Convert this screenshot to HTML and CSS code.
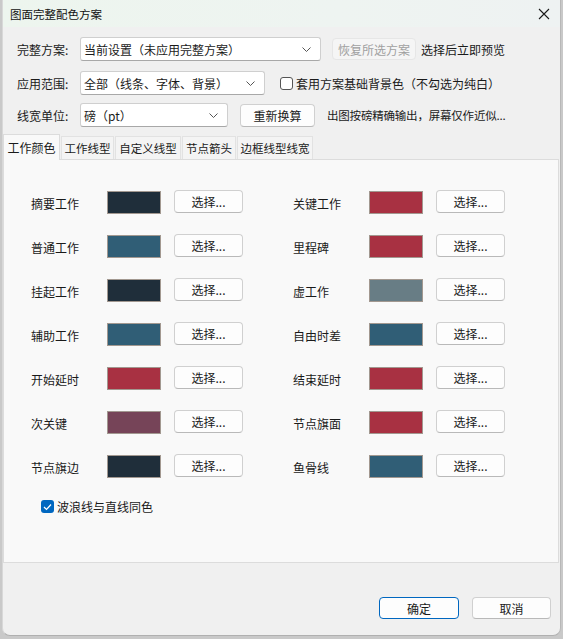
FILE: index.html
```html
<!DOCTYPE html>
<html lang="zh">
<head>
<meta charset="utf-8">
<link rel="stylesheet" href="styles.css">
</head>
<body>
<div class="win">
  <div class="titlebar">
    <span class="title">图面完整配色方案</span>
    <svg class="close" width="12" height="12" viewBox="0 0 12 12"><path d="M1 1L11 11M11 1L1 11" stroke="#1a1a1a" stroke-width="1.1" fill="none"/></svg>
  </div>
  <div class="form">
    <div class="frow r1">
      <span class="lbl">完整方案:</span>
      <div class="combo c1"><span>当前设置（未应用完整方案）</span><svg class="chev" width="9" height="5" viewBox="0 0 9 5"><path d="M0.5 0.5L4.5 4.5L8.5 0.5" stroke="#555" fill="none"/></svg></div>
      <div class="btn dis b1">恢复所选方案</div>
      <span class="note">选择后立即预览</span>
    </div>
    <div class="frow r2">
      <span class="lbl">应用范围:</span>
      <div class="combo c2"><span>全部（线条、字体、背景）</span><svg class="chev" width="9" height="5" viewBox="0 0 9 5"><path d="M0.5 0.5L4.5 4.5L8.5 0.5" stroke="#555" fill="none"/></svg></div>
      <span class="cb"></span>
      <span class="note2">套用方案基础背景色（不勾选为纯白）</span>
    </div>
    <div class="frow r3">
      <span class="lbl">线宽单位:</span>
      <div class="combo c3"><span>磅（pt）</span><svg class="chev" width="9" height="5" viewBox="0 0 9 5"><path d="M0.5 0.5L4.5 4.5L8.5 0.5" stroke="#555" fill="none"/></svg></div>
      <div class="btn b2">重新换算</div>
      <span class="note3">出图按磅精确输出，屏幕仅作近似...</span>
    </div>
  </div>
  <div class="tabs">
    <div class="tab sel t1">工作颜色</div>
    <div class="tab t2">工作线型</div>
    <div class="tab t3">自定义线型</div>
    <div class="tab t4">节点箭头</div>
    <div class="tab t5">边框线型线宽</div>
  </div>
  <div class="panel">
    <div class="grid">
      <div class="item"><span class="il">摘要工作</span><span class="sw" style="background:#1f2e3a"></span><div class="btn pick">选择...</div></div>
      <div class="item"><span class="il">关键工作</span><span class="sw" style="background:#a83142"></span><div class="btn pick">选择...</div></div>
      <div class="item"><span class="il">普通工作</span><span class="sw" style="background:#305e76"></span><div class="btn pick">选择...</div></div>
      <div class="item"><span class="il">里程碑</span><span class="sw" style="background:#a83142"></span><div class="btn pick">选择...</div></div>
      <div class="item"><span class="il">挂起工作</span><span class="sw" style="background:#1f2e3a"></span><div class="btn pick">选择...</div></div>
      <div class="item"><span class="il">虚工作</span><span class="sw" style="background:#687d85"></span><div class="btn pick">选择...</div></div>
      <div class="item"><span class="il">辅助工作</span><span class="sw" style="background:#305e76"></span><div class="btn pick">选择...</div></div>
      <div class="item"><span class="il">自由时差</span><span class="sw" style="background:#305e76"></span><div class="btn pick">选择...</div></div>
      <div class="item"><span class="il">开始延时</span><span class="sw" style="background:#a83142"></span><div class="btn pick">选择...</div></div>
      <div class="item"><span class="il">结束延时</span><span class="sw" style="background:#a83142"></span><div class="btn pick">选择...</div></div>
      <div class="item"><span class="il">次关键</span><span class="sw" style="background:#764458"></span><div class="btn pick">选择...</div></div>
      <div class="item"><span class="il">节点旗面</span><span class="sw" style="background:#a83142"></span><div class="btn pick">选择...</div></div>
      <div class="item"><span class="il">节点旗边</span><span class="sw" style="background:#1f2e3a"></span><div class="btn pick">选择...</div></div>
      <div class="item"><span class="il">鱼骨线</span><span class="sw" style="background:#305e76"></span><div class="btn pick">选择...</div></div>
    </div>
    <div class="wave">
      <span class="cbon"><svg width="9" height="8" viewBox="0 0 9 8"><path d="M1 4L3.5 6.5L8 1.5" stroke="#fff" stroke-width="1.2" fill="none"/></svg></span>
      <span>波浪线与直线同色</span>
    </div>
  </div>
  <div class="foot">
    <div class="btn ok">确定</div>
    <div class="btn cancel">取消</div>
  </div>
</div>
</body>
</html>
```

FILE: styles.css
```css
* { box-sizing: border-box; }
html, body { margin: 0; padding: 0; }
body {
  width: 563px;
  height: 639px;
  background: #c9c9c9;
  font-family: "Noto Sans CJK SC", "Noto Sans", sans-serif;
  font-size: 12px;
  color: #1a1a1a;
  overflow: hidden;
}
.win {
  margin-left: 2px;
  width: 559px;
  height: 636px;
  background: #f0f0f0;
  border-left: 1px solid #d8d8d8;
  border-right: 1px solid #b8b8b8;
  border-bottom: 1px solid #b0b0b0;
  border-radius: 0 0 8px 8px;
  display: flex;
  flex-direction: column;
  overflow: hidden;
}
.titlebar {
  height: 27px;
  background: linear-gradient(90deg, #edf5ee 0%, #eef4f1 60%, #eef2f2 100%);
  display: flex;
  align-items: center;
  justify-content: space-between;
  padding: 0 10px 0 7px;
}
.title { font-size: 11.5px; color: #111; }
.close { display: block; }
.form {
  padding: 10px 0 0 14px;
  display: flex;
  flex-direction: column;
}
.frow {
  display: flex;
  align-items: center;
  white-space: nowrap;
}
.r1 { height: 24px; }
.r2 { height: 24px; margin-top: 10px; }
.r3 { height: 24px; margin-top: 8px; }
.lbl { width: 63px; }
.combo {
  height: 24px;
  background: #fff;
  border: 1px solid #cfcfcf;
  border-bottom-color: #a8a8a8;
  border-radius: 3px;
  display: flex;
  align-items: center;
  justify-content: space-between;
  padding: 0 9px 0 3px;
}
.chev { display: block; }
.c1 { width: 241px; }
.c2 { width: 185px; }
.c3 { width: 148px; }
.btn {
  background: #fdfdfd;
  border: 1px solid #d0d0d0;
  border-bottom-color: #b9b9b9;
  border-radius: 4px;
  display: flex;
  align-items: center;
  justify-content: center;
  height: 22px;
}
.b1 { width: 84px; margin-left: 11px; background: #f5f5f5; border-color: #e6e6e6; color: #a0a0a0; }
.note { margin-left: 5px; }
.cb {
  width: 13px; height: 13px;
  border: 1px solid #555;
  border-radius: 3px;
  background: #fff;
  margin-left: 15px;
}
.note2 { margin-left: 3px; }
.b2 { width: 75px; margin-left: 12px; height: 23px; }
.note3 { margin-left: 12px; font-size: 11.5px; letter-spacing: -0.2px; }
.tabs {
  margin-top: 7px;
  display: flex;
  align-items: flex-end;
  height: 25px;
  position: relative;
  z-index: 1;
}
.tab {
  height: 23px;
  display: flex;
  align-items: center;
  justify-content: center;
  background: #f4f4f4;
  border: 1px solid #e2e2e2;
  border-bottom: none;
  margin-right: 1px;
  font-size: 11.5px;
  white-space: nowrap;
}
.t1 { width: 57px; }
.t2 { width: 53px; }
.t3 { width: 66px; }
.t4 { width: 54px; }
.t5 { width: 76px; }
.tab.sel {
  height: 26px;
  background: #f9f9f9;
  border-color: #dcdcdc;
  margin-bottom: -1px;
  font-size: 12px;
}
.panel {
  height: 404px;
  margin: 0 1px 0 0;
  background: #f9f9f9;
  border: 1px solid #dcdcdc;
  padding: 30px 0 0 27px;
}
.grid {
  display: grid;
  grid-template-columns: 262px 262px;
  row-gap: 21px;
}
.item {
  display: flex;
  align-items: center;
  height: 23px;
}
.il { width: 76px; padding-top: 3px; }
.sw {
  width: 54px;
  height: 23px;
  border: 1px solid #a29890;
  margin-top: 1px;
}
.pick { width: 69px; height: 23px; margin-left: 13px; }
.wave {
  display: flex;
  align-items: center;
  margin-top: 21px;
  margin-left: 10px;
}
.cbon {
  width: 13px; height: 13px;
  background: #0067c0;
  border-radius: 3px;
  display: flex;
  align-items: center;
  justify-content: center;
  margin-right: 3px;
}
.cbon svg { display: block; }
.foot {
  display: flex;
  justify-content: flex-end;
  padding: 34px 9px 0 0;
}
.ok { width: 80px; height: 22px; border: 1px solid #0067c0; margin-right: 13px; }
.cancel { width: 79px; height: 22px; }
```
